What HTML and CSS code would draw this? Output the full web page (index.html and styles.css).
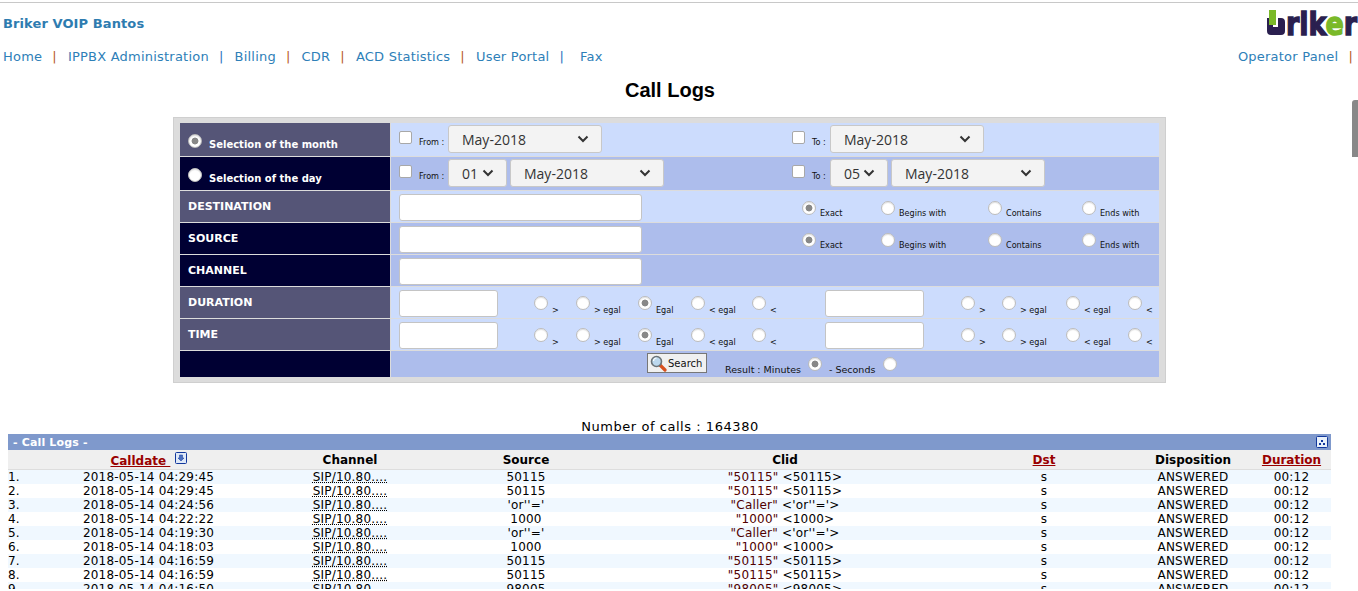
FILE: index.html
```html
<!DOCTYPE html>
<html lang="en">
<head>
    <meta charset="UTF-8">
    <title>Call Logs</title>
    <link rel="stylesheet" href="styles.css">
</head>
<body>
<div class="page">
    <div class="top-bar">
        <div class="brand">Briker VOIP Bantos</div>
        <div class="logo">
            <svg width="19" height="25" viewBox="0 0 19 25">
                <path d="M0 8h6v9h5V8h3a4 4 0 0 1 4 4v9a4 4 0 0 1-4 4H4a4 4 0 0 1-4-4z" fill="#2a1f4f"/>
                <rect x="2" y="0" width="7" height="15" fill="#7ab929"/>
            </svg>
            <span class="logo-word">rik<span class="logo-e">e</span>r</span>
        </div>
    </div>
    <div class="nav">
        <div class="nav-left">
            <a>Home</a><span class="sep">|</span><a>IPPBX Administration</a><span class="sep blue">|</span><a>Billing</a><span class="sep">|</span><a>CDR</a><span class="sep">|</span><a>ACD Statistics</a><span class="sep">|</span><a>User Portal</a><span class="sep blue">|</span><a class="fax">Fax</a>
        </div>
        <div class="nav-right">
            <a>Operator Panel</a><span class="sep">|</span>
        </div>
    </div>
    <h1>Call Logs</h1>

    <div class="search-box">
        <div class="form-row row-date">
            <div class="label label-light"><input type="radio" name="sel" checked><span>Selection of the month</span></div>
            <div class="fields light date-fields">
                <div class="date-cell"><input type="checkbox"><small class="from">From :</small><select class="sel-month"><option>May-2018</option></select></div>
                <div class="date-cell"><input type="checkbox"><small class="to">To :</small><select class="sel-month"><option>May-2018</option></select></div>
            </div>
        </div>
        <div class="form-row row-date">
            <div class="label label-dark"><input type="radio" name="sel"><span>Selection of the day</span></div>
            <div class="fields dark date-fields">
                <div class="date-cell"><input type="checkbox"><small class="from">From :</small><select class="sel-day"><option>01</option></select><select class="sel-month"><option>May-2018</option></select></div>
                <div class="date-cell"><input type="checkbox"><small class="to">To :</small><select class="sel-day"><option>05</option></select><select class="sel-month"><option>May-2018</option></select></div>
            </div>
        </div>
        <div class="form-row">
            <div class="label label-light caps">DESTINATION</div>
            <div class="fields light match-fields">
                <div class="cell"><input type="text" class="text-long"></div>
                <label class="cell"><input type="radio" name="dest" checked><small>Exact</small></label>
                <label class="cell"><input type="radio" name="dest"><small>Begins with</small></label>
                <label class="cell"><input type="radio" name="dest"><small>Contains</small></label>
                <label class="cell"><input type="radio" name="dest"><small>Ends with</small></label>
            </div>
        </div>
        <div class="form-row">
            <div class="label label-dark caps">SOURCE</div>
            <div class="fields dark match-fields">
                <div class="cell"><input type="text" class="text-long"></div>
                <label class="cell"><input type="radio" name="src" checked><small>Exact</small></label>
                <label class="cell"><input type="radio" name="src"><small>Begins with</small></label>
                <label class="cell"><input type="radio" name="src"><small>Contains</small></label>
                <label class="cell"><input type="radio" name="src"><small>Ends with</small></label>
            </div>
        </div>
        <div class="form-row">
            <div class="label label-dark caps">CHANNEL</div>
            <div class="fields dark match-fields">
                <div class="cell"><input type="text" class="text-long"></div>
            </div>
        </div>
        <div class="form-row">
            <div class="label label-light caps">DURATION</div>
            <div class="fields light range-fields">
                <div class="cell"><input type="text" class="text-short"></div>
                <label class="cell"><input type="radio" name="d1"><small>&gt;</small></label>
                <label class="cell"><input type="radio" name="d1"><small>&gt; egal</small></label>
                <label class="cell"><input type="radio" name="d1" checked><small>Egal</small></label>
                <label class="cell"><input type="radio" name="d1"><small>&lt; egal</small></label>
                <label class="cell"><input type="radio" name="d1"><small>&lt;</small></label>
                <div class="cell"><input type="text" class="text-short"></div>
                <label class="cell"><input type="radio" name="d2"><small>&gt;</small></label>
                <label class="cell"><input type="radio" name="d2"><small>&gt; egal</small></label>
                <label class="cell"><input type="radio" name="d2"><small>&lt; egal</small></label>
                <label class="cell"><input type="radio" name="d2"><small>&lt;</small></label>
            </div>
        </div>
        <div class="form-row">
            <div class="label label-light caps">TIME</div>
            <div class="fields light range-fields">
                <div class="cell"><input type="text" class="text-short"></div>
                <label class="cell"><input type="radio" name="t1"><small>&gt;</small></label>
                <label class="cell"><input type="radio" name="t1"><small>&gt; egal</small></label>
                <label class="cell"><input type="radio" name="t1" checked><small>Egal</small></label>
                <label class="cell"><input type="radio" name="t1"><small>&lt; egal</small></label>
                <label class="cell"><input type="radio" name="t1"><small>&lt;</small></label>
                <div class="cell"><input type="text" class="text-short"></div>
                <label class="cell"><input type="radio" name="t2"><small>&gt;</small></label>
                <label class="cell"><input type="radio" name="t2"><small>&gt; egal</small></label>
                <label class="cell"><input type="radio" name="t2"><small>&lt; egal</small></label>
                <label class="cell"><input type="radio" name="t2"><small>&lt;</small></label>
            </div>
        </div>
        <div class="form-row row-submit">
            <div class="label label-dark"></div>
            <div class="fields dark submit-fields">
                <button type="button" class="search-btn">
                    <svg width="17" height="17" viewBox="0 0 17 17">
                        <path d="M10 10l5 5" stroke="#d8501e" stroke-width="3.2" stroke-linecap="round"/>
                        <circle cx="6.5" cy="6.5" r="5" fill="#bcd8ee" stroke="#6b7378" stroke-width="1.6"/>
                        <path d="M3.5 6a3 3 0 0 1 3-3" fill="none" stroke="#fff" stroke-width="1.2"/>
                    </svg>
                    Search
                </button>
                <span class="result-text first">Result : Minutes</span><input type="radio" name="unit" checked>
                <span class="result-text">- Seconds</span><input type="radio" name="unit">
            </div>
        </div>
    </div>

    <div class="count">Number of calls : 164380</div>

    <div class="logs">
        <div class="logs-title">
            <span>- Call Logs -</span>
            <svg width="12" height="12" viewBox="0 0 12 12">
                <rect x="0.5" y="0.5" width="11" height="11" rx="1" fill="#e8f0fa" stroke="#12389c"/>
                <path d="M5 4h2v2H5zM3 7h2v2H3zM7 7h2v2H7z" fill="#12389c"/>
            </svg>
        </div>
        <table class="logs-table">
            <colgroup>
                <col class="c-num"><col class="c-date"><col class="c-chan"><col class="c-src"><col class="c-clid"><col class="c-dst"><col class="c-disp"><col class="c-dur">
            </colgroup>
            <thead>
                <tr>
                    <th></th>
                    <th class="sorted"><a>Calldate&nbsp;</a>
                        <svg width="12" height="12" viewBox="0 0 12 12">
                            <rect x="0.5" y="0.5" width="11" height="11" rx="1" fill="#dfe9f8" stroke="#12389c"/>
                            <path d="M4.5 3h3v3h1.5L6 9 3 6h1.5z" fill="#4a6fc0" stroke="#12389c" stroke-width="0.5"/>
                        </svg>
                    </th>
                    <th>Channel</th>
                    <th>Source</th>
                    <th>Clid</th>
                    <th><a>Dst</a></th>
                    <th>Disposition</th>
                    <th><a>Duration</a></th>
                </tr>
            </thead>
            <tbody>
                <tr><td class="num">1.</td><td>2018-05-14 04:29:45</td><td><abbr>SIP/10.80....</abbr></td><td>50115</td><td><b>"50115"</b> &lt;50115&gt;</td><td>s</td><td>ANSWERED</td><td>00:12</td></tr>
                <tr><td class="num">2.</td><td>2018-05-14 04:29:45</td><td><abbr>SIP/10.80....</abbr></td><td>50115</td><td><b>"50115"</b> &lt;50115&gt;</td><td>s</td><td>ANSWERED</td><td>00:12</td></tr>
                <tr><td class="num">3.</td><td>2018-05-14 04:24:56</td><td><abbr>SIP/10.80....</abbr></td><td>'or''='</td><td><b>"Caller"</b> &lt;'or''='&gt;</td><td>s</td><td>ANSWERED</td><td>00:12</td></tr>
                <tr><td class="num">4.</td><td>2018-05-14 04:22:22</td><td><abbr>SIP/10.80....</abbr></td><td>1000</td><td><b>"1000"</b> &lt;1000&gt;</td><td>s</td><td>ANSWERED</td><td>00:12</td></tr>
                <tr><td class="num">5.</td><td>2018-05-14 04:19:30</td><td><abbr>SIP/10.80....</abbr></td><td>'or''='</td><td><b>"Caller"</b> &lt;'or''='&gt;</td><td>s</td><td>ANSWERED</td><td>00:12</td></tr>
                <tr><td class="num">6.</td><td>2018-05-14 04:18:03</td><td><abbr>SIP/10.80....</abbr></td><td>1000</td><td><b>"1000"</b> &lt;1000&gt;</td><td>s</td><td>ANSWERED</td><td>00:12</td></tr>
                <tr><td class="num">7.</td><td>2018-05-14 04:16:59</td><td><abbr>SIP/10.80....</abbr></td><td>50115</td><td><b>"50115"</b> &lt;50115&gt;</td><td>s</td><td>ANSWERED</td><td>00:12</td></tr>
                <tr><td class="num">8.</td><td>2018-05-14 04:16:59</td><td><abbr>SIP/10.80....</abbr></td><td>50115</td><td><b>"50115"</b> &lt;50115&gt;</td><td>s</td><td>ANSWERED</td><td>00:12</td></tr>
                <tr><td class="num">9.</td><td>2018-05-14 04:16:50</td><td><abbr>SIP/10.80....</abbr></td><td>98005</td><td><b>"98005"</b> &lt;98005&gt;</td><td>s</td><td>ANSWERED</td><td>00:12</td></tr>
            </tbody>
        </table>
    </div>
</div>
<div class="scroll-thumb"></div>
</body>
</html>
```
FILE: styles.css
```css
html, body {
    margin: 0;
    padding: 0;
    height: 100%;
    overflow: hidden;
    background: #fff;
}

body {
    font-family: "DejaVu Sans", sans-serif;
    font-size: 13px;
    color: #000;
}

.page {
    height: 589px;
    overflow: hidden;
    padding-top: 2px;
    box-sizing: border-box;
}

/* top of the page */
.top-bar {
    border-top: 1px solid #c8c8c8;
    height: 39px;
    display: flex;
    justify-content: space-between;
    align-items: flex-start;
    padding-left: 3px;
}

.brand {
    font-weight: bold;
    font-size: 13px;
    line-height: 16px;
    margin-top: 13px;
    letter-spacing: 0.1px;
    color: #2e7cb0;
}

.logo {
    display: flex;
    align-items: flex-start;
    height: 25px;
    margin-top: 7px;
    padding-right: 1px;
}

.logo-word {
    display: inline-block;
    margin-top: 3px;
    font-weight: bold;
    font-size: 27px;
    line-height: 25px;
    letter-spacing: -0.1px;
    color: #2a1f4f;
    -webkit-text-stroke: 1.2px #2a1f4f;
    transform: scaleY(1.2);
    transform-origin: 50% 22px;
}

.logo-e {
    color: #7ab929;
    -webkit-text-stroke: 1.2px #7ab929;
}

.nav {
    display: flex;
    justify-content: space-between;
    padding-left: 3px;
    line-height: 16px;
    height: 16px;
    margin-top: 7px;
    letter-spacing: 0.22px;
}

.nav a {
    color: #2e80b8;
}

.sep {
    color: #b8591e;
    margin: 0 11px 0 10px;
}

.sep.blue {
    color: #2a72c0;
}

.fax {
    margin-left: 5px;
}

.nav-right .sep {
    margin-right: 5px;
}

h1 {
    margin: 15px 0 0;
    height: 20px;
    line-height: 20px;
    text-align: center;
    font-family: "Liberation Sans", sans-serif;
    font-size: 20px;
    font-weight: bold;
    padding-right: 18px;
}

/* search form */
.search-box {
    width: 979px;
    margin: 17px 0 0 173px;
    padding: 5px 6px;
    background: #dcdcdc;
    border: 1px solid #cfcfcf;
    display: flex;
    flex-direction: column;
    gap: 1px;
}

.form-row {
    display: grid;
    grid-template-columns: 210px 1fr;
    column-gap: 1px;
    height: 31px;
}

.row-date {
    height: 33px;
}

.row-submit {
    height: 26px;
}

.label {
    color: #fff;
    font-weight: bold;
    font-size: 11px;
}

.label-light {
    background: #555577;
}

.label-dark {
    background: #000033;
}

.caps {
    padding: 9px 0 0 8px;
    line-height: 14px;
}

.row-date .label {
    display: flex;
    align-items: flex-start;
    padding: 11px 0 0 8px;
    font-size: 10px;
}

.row-date .label span {
    margin: 4px 0 0 7px;
    line-height: 14px;
}

.light {
    background: #ccdcfd;
}

.dark {
    background: #adbdec;
}

.fields {
    display: grid;
    align-items: start;
}

.date-fields {
    grid-template-columns: 393px 1fr;
}

.match-fields {
    grid-template-columns: 403px 79px 107px 94px 1fr;
}

.range-fields {
    grid-template-columns: 135px 42px 62px 53px 61px 73px 136px 41px 64px 62px 1fr;
}

.cell, .date-cell {
    padding-left: 8px;
    display: flex;
    align-items: flex-start;
}

.date-cell {
    padding-top: 2px;
}

.cell {
    padding-top: 10px;
}

.range-fields .cell {
    padding-top: 9px;
}

.cell:has(> input[type="text"]), .range-fields .cell:has(> input[type="text"]) {
    padding-top: 3px;
}

small {
    font-family: "DejaVu Sans Condensed", "DejaVu Sans", sans-serif;
    font-size: 9px;
    line-height: 12px;
    color: #111;
    margin: 6px 0 0 4px;
    white-space: nowrap;
}

.range-fields small {
    margin-top: 8px;
}

/* form controls */
input[type="radio"] {
    appearance: none;
    flex: none;
    width: 14px;
    height: 14px;
    margin: 0;
    border-radius: 50%;
    border: 1px solid #bcbcbc;
    background: #fff;
    box-shadow: inset 0 1px 1px #e0e0e0;
}

input[type="radio"]:checked {
    background: radial-gradient(circle, #888 0 3px, #fff 3.8px);
}

input[type="checkbox"] {
    appearance: none;
    flex: none;
    width: 13px;
    height: 13px;
    margin: 6px 0 0;
    border: 1px solid #a8a8a8;
    border-radius: 2px;
    background: #fff;
}

.date-cell small {
    margin: 11px 3px 0 7px;
}

.date-cell .from {
    width: 26px;
}

.date-cell .to {
    width: 15px;
}

select {
    appearance: none;
    height: 28px;
    margin: 0 0 0 3px;
    padding: 0 0 0 13px;
    border: 1px solid #c8c8c8;
    border-radius: 3px;
    font-family: "Open Sans", sans-serif;
    font-size: 14px;
    color: #333;
    background-color: #f3f3f3;
    background-image: url("data:image/svg+xml,%3Csvg xmlns='http://www.w3.org/2000/svg' width='12' height='8'%3E%3Cpath d='M1.5 1.5L6 6l4.5-4.5' fill='none' stroke='%23333' stroke-width='2'/%3E%3C/svg%3E");
    background-repeat: no-repeat;
    background-position: right 12px top 9px;
}

small + select {
    margin-left: 0;
}

.sel-month {
    width: 154px;
}

.sel-day {
    width: 59px;
}

.to + .sel-day {
    width: 58px;
}

input[type="text"] {
    box-sizing: border-box;
    height: 27px;
    margin: 0;
    border: 1px solid #c4c4c4;
    border-radius: 3px;
    background: #fff;
}

.text-long {
    width: 243px;
}

.text-short {
    width: 99px;
}

.submit-fields {
    display: flex;
    align-items: flex-start;
    padding-left: 256px;
    padding-top: 2px;
}

.search-btn {
    display: flex;
    align-items: center;
    gap: 1px;
    box-sizing: border-box;
    width: 60px;
    height: 20px;
    padding: 0 0 0 2px;
    border: 1px solid #777;
    background: #f0f0f0;
    font-family: "DejaVu Sans", sans-serif;
    font-size: 10px;
    color: #111;
}

.result-text {
    font-size: 9.5px;
    line-height: 12px;
    margin: 11px 8px 0 0;
    color: #111;
}

.result-text.first {
    margin: 11px 7px 0 18px;
}

.submit-fields input {
    margin: 4px 7px 0 0;
}

/* call list */
.count {
    margin-top: 36px;
    height: 15px;
    line-height: 15px;
    text-align: center;
    padding-right: 18px;
    letter-spacing: 0.55px;
}

.logs {
    width: 1323px;
    margin: 0 0 0 8px;
}

.logs-title {
    background: #7f99cc;
    height: 16px;
    display: flex;
    justify-content: space-between;
    align-items: center;
    padding: 0 3px 0 5px;
    color: #fff;
    font-size: 11px;
    font-weight: bold;
    letter-spacing: 0.15px;
}

.logs-table {
    width: 100%;
    table-layout: fixed;
    border-collapse: collapse;
}

.c-num { width: 25px; }
.c-date { width: 231px; }
.c-chan { width: 172px; }
.c-src { width: 180px; }
.c-clid { width: 338px; }
.c-dst { width: 180px; }
.c-disp { width: 118px; }
.c-dur { width: 79px; }

.logs-table th {
    background: #efefef;
    border-bottom: 1px solid #ddd;
    height: 19px;
    padding: 0;
    font-size: 12px;
    line-height: 14px;
}

.logs-table th a {
    color: #990000;
    text-decoration: underline;
}

.sorted svg {
    vertical-align: 1px;
}

.logs-table td {
    height: 14px;
    padding: 0;
    font-size: 12px;
    letter-spacing: 0.2px;
    line-height: 14px;
    text-align: center;
    white-space: nowrap;
    overflow: hidden;
}

.logs-table td.num {
    text-align: left;
}

.logs-table tbody tr:nth-child(odd) {
    background: #f0f8ff;
}

abbr {
    text-decoration: underline dotted;
}

td b {
    font-weight: normal;
    color: #500000;
}

.scroll-thumb {
    position: absolute;
    top: 100px;
    right: 0;
    width: 6px;
    height: 57px;
    background: #888;
    border-top-left-radius: 3px;
}
```
